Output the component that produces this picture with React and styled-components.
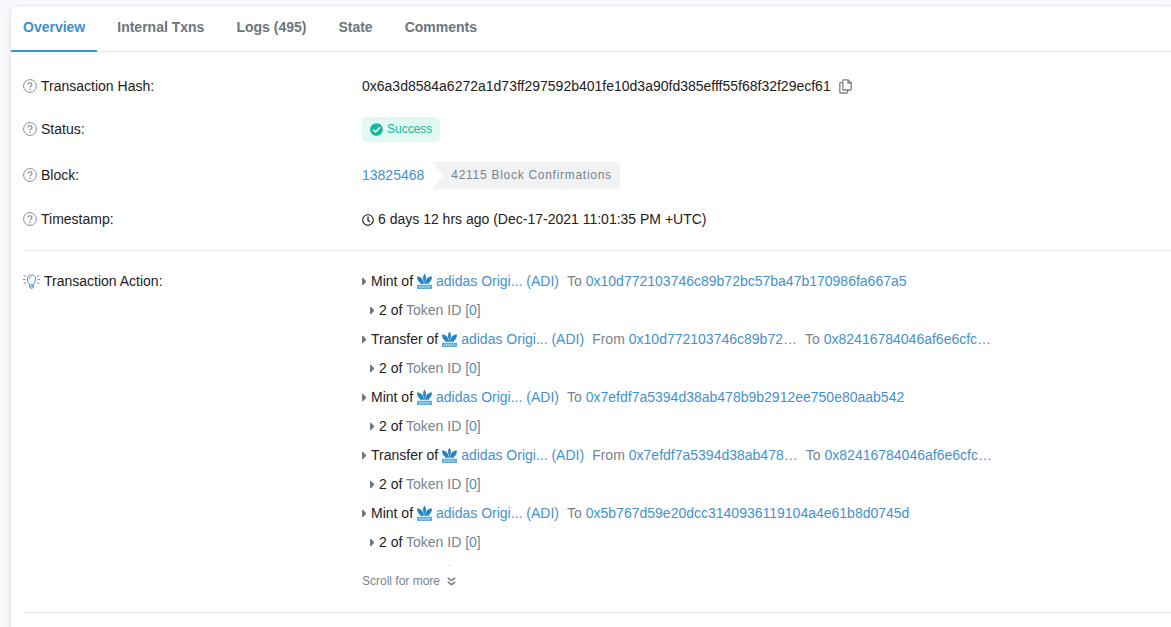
import React from "react";
import styled, { createGlobalStyle } from "styled-components";
import { FaCheckCircle, FaRegClock, FaCaretRight } from "react-icons/fa";

const GlobalStyle = createGlobalStyle`
    * {
        box-sizing: border-box;
    }

    body {
        margin: 0;
        overflow: hidden;
        background: #f8f9fc;
        color: #1e2022;
        font-family: "Liberation Sans", Arial, sans-serif;
        font-size: 14px;
        line-height: 21px;
    }
`;

const Page = styled.main`
    min-height: 100vh;
    padding: 5px 0 0 10px;
`;

const Card = styled.section`
    min-height: 640px;
    border: 1px solid #e7eaee;
    border-right: 0;
    border-radius: 6px 0 0 0;
    background: #fff;
    box-shadow: 0 6px 12px rgba(140, 152, 164, 0.16);
`;

const Tabs = styled.nav`
    display: flex;
    gap: 8px;
    height: 46px;
    border-bottom: 1px solid #e7eaf0;
`;

const Tab = styled.a`
    height: 46px;
    padding: 11px 12px 0;
    border-bottom: 2px solid ${({ $active }) => ($active ? "#3498db" : "transparent")};
    color: ${({ $active }) => ($active ? "#3d8fd3" : "#6c757e")};
    font-weight: bold;
    text-decoration: none;
    white-space: nowrap;
`;

const Details = styled.div`
    display: flex;
    flex-direction: column;
    gap: 20px;
    padding: 24px 0 24px 12px;
`;

const Row = styled.div`
    display: flex;
    align-items: ${({ $top }) => ($top ? "flex-start" : "center")};
`;

const Label = styled.div`
    display: flex;
    flex: 0 0 339px;
    align-items: center;
    gap: 4px;
`;

const Value = styled.div`
    display: flex;
    flex: 1;
    align-items: center;
    min-width: 0;
    white-space: nowrap;
`;

const Divider = styled.hr`
    width: 100%;
    height: 1px;
    margin: 0;
    border: 0;
    background: #e7eaee;
`;

const Link = styled.a`
    color: #4391d2;
    text-decoration: none;
`;

const Muted = styled.span`
    color: #77838f;
`;

const CopyButton = styled.button`
    display: flex;
    margin-left: 8px;
    padding: 0;
    border: 0;
    background: none;
    color: #77838f;
    cursor: pointer;
`;

const StatusBadge = styled.span`
    display: flex;
    align-items: center;
    gap: 4px;
    height: 25px;
    padding: 0 8px;
    border-radius: 5px;
    background: #e2f8f3;
    color: #10b998;
    font-size: 12px;
`;

const Confirmations = styled.span`
    height: 27px;
    margin-left: 8px;
    padding: 0 8px 0 19px;
    border-radius: 0 3px 3px 0;
    background: #f1f2f4;
    clip-path: polygon(0 0, 100% 0, 100% 100%, 0 100%, 11px 50%);
    color: #77838f;
    font-size: 12px;
    line-height: 26px;
    letter-spacing: 0.06em;
`;

const Time = styled.span`
    display: flex;
    align-items: center;
    gap: 4px;
`;

const ActionColumn = styled.div`
    flex: 1;
    min-width: 0;
`;

const ActionList = styled.ul`
    margin: 0;
    padding: 0;
    list-style: none;
    white-space: nowrap;
`;

const Action = styled.li`
    display: flex;
    align-items: center;
    gap: 4px;
    height: 21px;
    margin-bottom: 8px;
    padding-left: ${({ $nested }) => ($nested ? "8px" : "0")};
`;

const Peek = styled.li`
    height: 5px;
    padding: 3px 0 0 80px;
    overflow: hidden;
    opacity: 0.4;
`;

const Caret = styled(FaCaretRight)`
    width: 5px;
    height: 13px;
    color: #6b7580;
`;

const Direction = styled(Muted)`
    margin-left: 4px;
`;

const ScrollHint = styled.div`
    display: flex;
    align-items: center;
    gap: 7px;
    padding-top: 5px;
    color: #77838f;
    font-size: 12px;
`;

const QuestionIcon = () => (
    <svg width="14" height="15" viewBox="0 0 14 15" fill="none" stroke="#77838f" aria-hidden="true">
        <circle cx="7" cy="7" r="6.4" strokeWidth="0.9" />
        <path d="M5 5.600c0-1.100.8-1.900 2-1.900s2 .7 2 1.800c0 1.400-1.900 1.400-1.900 2.900" strokeWidth="1.100" />
        <circle cx="7.100" cy="10.200" r=".8" fill="#77838f" stroke="none" />
    </svg>
);

const BulbIcon = () => (
    <svg width="17" height="15" viewBox="0 0 17 15" fill="none" stroke="#4d82c4" strokeWidth="0.9" aria-hidden="true">
        <path d="M6.5 10.7C6.4 9 4.4 8.1 4.4 5A4.1 4.1 0 0 1 12.6 5c0 3.1-2 4-2.1 5.7z" />
        <path d="M6.5 10.7v2.1l1 1.4h2l1-1.4v-2.1M6.5 12.4h4M6.4 5c0-1.2.9-2.1 2.1-2.1" />
        <path d="M0 5.6h2.4M14.6 5.6H17M.7 1.4l2.2 1.2M16.3 1.4l-2.2 1.2M.7 9.8l2.2-1.2M16.3 9.8l-2.2-1.2" />
    </svg>
);

const CopyIcon = () => (
    <svg width="13" height="15" viewBox="0 0 13 15" fill="none" stroke="currentColor" strokeWidth="1.3" aria-hidden="true">
        <path d="M4.6.8h4.6l3 3v6.4q0 .8-.8.8H4.600q-.8 0-.8-.8V1.600q0-.8.8-.8z" />
        <path d="M9 .9V4h3.100M3.800 3.600H1.600q-.8 0-.8.8v8.800q0 .8.8.8h6.200q.8 0 .8-.8V11" />
    </svg>
);

const AdidasIcon = () => (
    <svg width="15" height="17" viewBox="0 0 15 17" fill="#2585c0" aria-hidden="true">
        <path d="M7.500.5c1.900 2.500 2 6 0 9.500-2-3.500-1.900-7 0-9.500z" />
        <path d="M0 3.500c3.300-.3 6 1.800 6.900 6.500H3.500C1.300 9 .1 6.500 0 3.500zM15 3.500c-3.300-.3-6 1.800-6.900 6.500h3.400C13.700 9 14.900 6.500 15 3.500z" />
        <path d="M3 9.500h9v1.200H3z" />
        <path d="M0 11.700h15V16H0z" fill="#62acd7" />
        <path d="M2 14h11" stroke="#d7edf8" strokeWidth="1.200" strokeDasharray="1.300 .6" />
    </svg>
);

const ChevronsIcon = () => (
    <svg width="9" height="9" viewBox="0 0 9 9" fill="none" stroke="currentColor" strokeWidth="1.600" aria-hidden="true">
        <path d="M.8.8l3.700 2.800L8.200.8M.8 4.900l3.700 2.800 3.700-2.800" />
    </svg>
);

const tabs = ["Overview", "Internal Txns", "Logs (495)", "State", "Comments"];

const actions = [
    { type: "Mint", to: "0x10d772103746c89b72bc57ba47b170986fa667a5" },
    { type: "Transfer", from: "0x10d772103746c89b72…", to: "0x82416784046af6e6cfc…" },
    { type: "Mint", to: "0x7efdf7a5394d38ab478b9b2912ee750e80aab542" },
    { type: "Transfer", from: "0x7efdf7a5394d38ab478…", to: "0x82416784046af6e6cfc…" },
    { type: "Mint", to: "0x5b767d59e20dcc3140936119104a4e61b8d0745d" },
];

const TokenAction = ({ type, from, to }) => (
    <>
        <Action>
            <Caret />
            <span>{type} of</span>
            <AdidasIcon />
            <Link href="#token">adidas Origi... (ADI)</Link>
            {from && (
                <>
                    <Direction>From</Direction>
                    <Link href="#from">{from}</Link>
                </>
            )}
            <Direction>To</Direction>
            <Link href="#to">{to}</Link>
        </Action>
        <Action $nested>
            <Caret />
            <span>
                2 of <Muted>Token ID [<Link href="#id">0</Link>]</Muted>
            </span>
        </Action>
    </>
);

export default function App() {
    return (
        <Page>
            <GlobalStyle />
            <Card>
                <Tabs>
                    {tabs.map((tab, i) => (
                        <Tab key={tab} href="#tab" $active={i === 0}>{tab}</Tab>
                    ))}
                </Tabs>
                <Details>
                    <Row>
                        <Label><QuestionIcon />Transaction Hash:</Label>
                        <Value>
                            0x6a3d8584a6272a1d73ff297592b401fe10d3a90fd385efff55f68f32f29ecf61
                            <CopyButton type="button" aria-label="Copy"><CopyIcon /></CopyButton>
                        </Value>
                    </Row>
                    <Row>
                        <Label><QuestionIcon />Status:</Label>
                        <Value>
                            <StatusBadge><FaCheckCircle size={13} />Success</StatusBadge>
                        </Value>
                    </Row>
                    <Row>
                        <Label><QuestionIcon />Block:</Label>
                        <Value>
                            <Link href="#block">13825468</Link>
                            <Confirmations>42115 Block Confirmations</Confirmations>
                        </Value>
                    </Row>
                    <Row>
                        <Label><QuestionIcon />Timestamp:</Label>
                        <Value>
                            <Time><FaRegClock size={12} />6 days 12 hrs ago (Dec-17-2021 11:01:35 PM +UTC)</Time>
                        </Value>
                    </Row>
                    <Divider />
                    <Row $top>
                        <Label><BulbIcon />Transaction Action:</Label>
                        <ActionColumn>
                            <ActionList>
                                {actions.map((action) => (
                                    <TokenAction key={action.to + action.type + action.from} {...action} />
                                ))}
                                {/* tip of the next row, above the scroll edge */}
                                <Peek aria-hidden="true"><AdidasIcon /></Peek>
                            </ActionList>
                            <ScrollHint>Scroll for more <ChevronsIcon /></ScrollHint>
                        </ActionColumn>
                    </Row>
                    <Divider />
                </Details>
            </Card>
        </Page>
    );
}
